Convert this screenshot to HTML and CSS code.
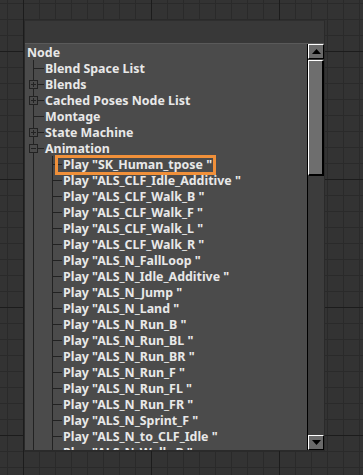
FILE: index.html
```html
<!DOCTYPE html>
<html>
<head>
<meta charset="utf-8">
<link rel="stylesheet" href="styles.css">
</head>
<body>
<div class="panel">
  <div class="header"></div>
  <div class="content">
    <div class="tree">
      <div class="row root"><span class="label">Node</span></div>
      <div class="row"><span class="g1"></span><span class="label">Blend Space List</span></div>
      <div class="row"><span class="g1"><i class="box plus"></i></span><span class="label">Blends</span></div>
      <div class="row"><span class="g1"><i class="box plus"></i></span><span class="label">Cached Poses Node List</span></div>
      <div class="row"><span class="g1"></span><span class="label">Montage</span></div>
      <div class="row"><span class="g1"><i class="box plus"></i></span><span class="label">State Machine</span></div>
      <div class="row"><span class="g1"><i class="box"></i></span><span class="label">Animation</span></div>
      <div class="row"><span class="g0"></span><span class="g2"></span><span class="label selected">Play "SK_Human_tpose "</span></div>
      <div class="row"><span class="g0"></span><span class="g2"></span><span class="label">Play "ALS_CLF_Idle_Additive "</span></div>
      <div class="row"><span class="g0"></span><span class="g2"></span><span class="label">Play "ALS_CLF_Walk_B "</span></div>
      <div class="row"><span class="g0"></span><span class="g2"></span><span class="label">Play "ALS_CLF_Walk_F "</span></div>
      <div class="row"><span class="g0"></span><span class="g2"></span><span class="label">Play "ALS_CLF_Walk_L "</span></div>
      <div class="row"><span class="g0"></span><span class="g2"></span><span class="label">Play "ALS_CLF_Walk_R "</span></div>
      <div class="row"><span class="g0"></span><span class="g2"></span><span class="label">Play "ALS_N_FallLoop "</span></div>
      <div class="row"><span class="g0"></span><span class="g2"></span><span class="label">Play "ALS_N_Idle_Additive "</span></div>
      <div class="row"><span class="g0"></span><span class="g2"></span><span class="label">Play "ALS_N_Jump "</span></div>
      <div class="row"><span class="g0"></span><span class="g2"></span><span class="label">Play "ALS_N_Land "</span></div>
      <div class="row"><span class="g0"></span><span class="g2"></span><span class="label">Play "ALS_N_Run_B "</span></div>
      <div class="row"><span class="g0"></span><span class="g2"></span><span class="label">Play "ALS_N_Run_BL "</span></div>
      <div class="row"><span class="g0"></span><span class="g2"></span><span class="label">Play "ALS_N_Run_BR "</span></div>
      <div class="row"><span class="g0"></span><span class="g2"></span><span class="label">Play "ALS_N_Run_F "</span></div>
      <div class="row"><span class="g0"></span><span class="g2"></span><span class="label">Play "ALS_N_Run_FL "</span></div>
      <div class="row"><span class="g0"></span><span class="g2"></span><span class="label">Play "ALS_N_Run_FR "</span></div>
      <div class="row"><span class="g0"></span><span class="g2"></span><span class="label">Play "ALS_N_Sprint_F "</span></div>
      <div class="row"><span class="g0"></span><span class="g2"></span><span class="label">Play "ALS_N_to_CLF_Idle "</span></div>
      <div class="row"><span class="g0"></span><span class="g2"></span><span class="label">Play "ALS_N_Walk_B "</span></div>
    </div>
    <div class="scrollbar">
      <div class="sbtn"><svg width="9" height="5" viewBox="0 0 9 5"><polygon points="4.5,0 9,5 0,5" fill="#000"/></svg></div>
      <div class="thumb"></div>
      <div class="track"></div>
      <div class="sbtn"><svg width="9" height="5" viewBox="0 0 9 5"><polygon points="0,0 9,0 4.5,5" fill="#000"/></svg></div>
    </div>
  </div>
</div>
</body>
</html>
```
FILE: styles.css
```css
html, body {
  margin: 0;
  padding: 0;
}
body {
  width: 363px;
  height: 475px;
  overflow: hidden;
  background-color: #333333;
  background-image:
    linear-gradient(to right, #1c1c1c 1px, transparent 1px),
    linear-gradient(to bottom, #1c1c1c 1px, transparent 1px),
    linear-gradient(to right, #2a2a2a 1px, transparent 1px),
    linear-gradient(to bottom, #2a2a2a 1px, transparent 1px);
  background-size: 128px 128px, 128px 128px, 16px 16px, 16px 16px;
  background-position: 23px 51px, 23px 51px, 7px 3px, 7px 3px;
  font-family: "Noto Sans", "DejaVu Sans", sans-serif;
  padding-top: 20px;
  padding-left: 24px;
  box-sizing: border-box;
}
.panel {
  width: 301px;
  height: 431px;
  border: 1px solid #2a2a2a;
  border-top-color: #2e2e2e;
  box-sizing: border-box;
  display: flex;
  flex-direction: column;
  background: #4b4b4b;
}
.header {
  height: 22px;
  background: #383838;
  border-bottom: 1px solid #5a5a5a;
  flex: none;
}
.content {
  flex: 1;
  display: flex;
  min-height: 0;
}
.tree {
  flex: 1;
  overflow: hidden;
  background: #4b4b4b;
  border-right: 1px solid #000;
}
.row {
  height: 16px;
  display: flex;
  align-items: stretch;
  color: #e8e8e8;
  font-size: 12.4px;
  font-weight: 700;
  line-height: 16px;
  white-space: nowrap;
}
.root .label {
  padding-left: 2px;
}
.label {
  padding-left: 1px;
  position: relative;
}
.label::before {
  content: "";
}
.label {
  top: 0.5px;
}
.g0, .g1, .g2 {
  position: relative;
  flex: none;
}
.g0, .g1 {
  width: 19px;
}
.g2 {
  width: 18px;
}
.g0::before, .g1::before, .g2::before {
  content: "";
  position: absolute;
  left: 8px;
  top: 0;
  bottom: 0;
  width: 1px;
  background: #222222;
}
.g1::after, .g2::after {
  content: "";
  position: absolute;
  left: 8px;
  right: 0;
  top: 8px;
  height: 1px;
  background: #222222;
}
.box {
  position: absolute;
  left: 4px;
  top: 4px;
  width: 9px;
  height: 9px;
  box-sizing: border-box;
  border: 1px solid #222222;
  background: #4b4b4b;
  z-index: 1;
}
.box::before {
  content: "";
  position: absolute;
  left: 1px;
  right: 1px;
  top: 3px;
  height: 1px;
  background: #222222;
}
.box.plus::after {
  content: "";
  position: absolute;
  top: 1px;
  bottom: 1px;
  left: 3px;
  width: 1px;
  background: #222222;
}
.selected::after {
  content: "";
  position: absolute;
  left: -7px;
  right: -4px;
  top: -1.5px;
  bottom: -2px;
  border: 3px solid #f0903a;
}
.scrollbar {
  width: 16px;
  flex: none;
  display: flex;
  flex-direction: column;
  background: #3c3c3c;
}
.sbtn {
  height: 15px;
  box-sizing: border-box;
  border-top: 1px solid #fff;
  border-left: 1px solid #fff;
  border-right: 1px solid #000;
  border-bottom: 1px solid #000;
  background: #6a6a6a;
  display: flex;
  align-items: center;
  justify-content: center;
  flex: none;
}
.thumb {
  height: 116px;
  margin-top: 1px;
  box-sizing: border-box;
  border-top: 1px solid #fff;
  border-left: 1px solid #fff;
  border-right: 2px solid #000;
  border-bottom: 2px solid #000;
  background: #6e6e6e;
  flex: none;
}
.track {
  flex: 1;
}
```
